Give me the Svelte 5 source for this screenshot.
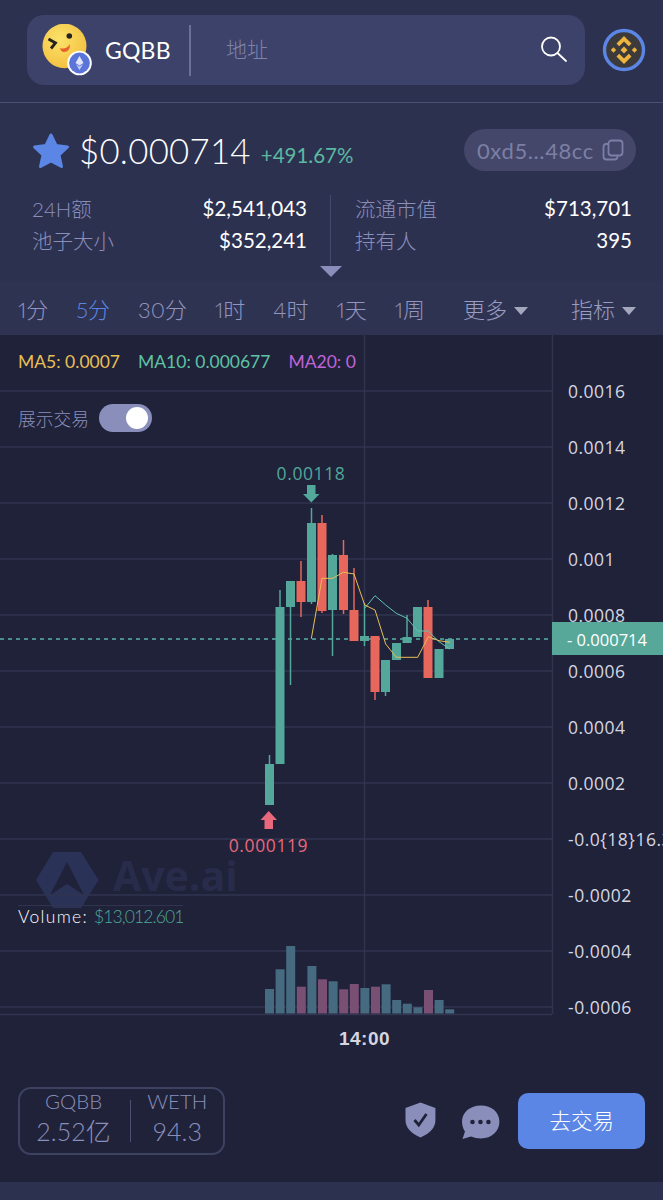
<script>
	const tabs = [
		{ label: '1分' },
		{ label: '5分', active: true },
		{ label: '30分' },
		{ label: '1时' },
		{ label: '4时' },
		{ label: '1天' },
		{ label: '1周' }
	];

	const axis = ['0.0016', '0.0014', '0.0012', '0.001', '0.0008', '0.0006', '0.0004', '0.0002', '-0.0{18}16.3', '-0.0002', '-0.0004', '-0.0006'];
	const gridY = axis.map((_, i) => 391 + i * 56);

	// x, body top, body bottom, wick top, wick bottom, up
	const candles = [
		[269.5, 764, 805, 755, 805, 1],
		[280, 607, 764, 590, 764, 1],
		[290.5, 581, 607, 581, 685, 1],
		[301, 581, 602, 561, 617, 0],
		[311.5, 523, 602, 508, 604, 1],
		[322, 523, 611, 515, 613, 0],
		[332.5, 555, 610, 554, 656, 1],
		[343.5, 555, 610, 540, 614, 0],
		[354, 610, 641, 568, 641, 0],
		[364.5, 636, 641, 603, 646, 1],
		[375, 636, 692, 636, 700, 0],
		[385.5, 660, 692, 660, 696, 1],
		[396.5, 643, 660, 643, 660, 1],
		[407, 637, 643, 615, 643, 1],
		[417.5, 607, 637, 607, 637, 1],
		[428, 607, 678, 600, 678, 0],
		[439, 649, 678, 649, 678, 1],
		[449.5, 639, 649, 639, 649, 1]
	];

	const ma5 = '311.3,638.7 322,578.3 332.7,578.3 343.3,572.3 354,574 364.7,605 375,610 385.7,644 396.3,657.3 407,657.3 417.7,657.3 428.3,636.7 439,640.7 449.7,642.3';
	const ma10 = '364.7,608.3 375,595.7 385.7,605 396.3,613.3 407,618.3 417.7,631 428.3,631 439,641.7 449.7,649';

	// top of the volume bar, pink when the candle closed down
	const volumes = [
		[989, 0], [969.3, 0], [946, 0], [986.7, 1], [966, 0], [979.3, 1], [981.3, 0], [989.3, 1], [984, 1],
		[988, 0], [986.7, 1], [984.3, 0], [1000, 0], [1003.7, 0], [1007.3, 0], [990, 1], [1000, 0], [1009.3, 0]
	];
</script>

<div class="page">
	<header class="top">
		<div class="search">
			<svg class="avatar" viewBox="0 0 52 52" width="52" height="52">
				<defs>
					<radialGradient id="face" cx="40%" cy="35%" r="75%">
						<stop offset="0" stop-color="#fbe26a" />
						<stop offset="1" stop-color="#f3bd3c" />
					</radialGradient>
				</defs>
				<ellipse cx="22.500" cy="22" rx="22" ry="22.300" fill="url(#face)" />
				<circle cx="27.300" cy="12" r="2.800" fill="#26231f" />
				<path d="M6.500 15 L13.500 19 L9 24.500" fill="none" stroke="#26231f" stroke-width="2.800" />
				<path d="M18 24 Q24 26 28 20 Q28 28 22 28 Q19 28 18 24Z" fill="#e8632c" />
				<circle cx="37.500" cy="39" r="12.300" fill="#fff" />
				<circle cx="37.500" cy="39" r="10.400" fill="#5b74d8" />
				<path d="M37.500 32 L41.500 39 L37.500 41.500 L33.500 39Z" fill="#dfe5fb" />
				<path d="M37.500 42.500 L41 40.200 L37.500 46 L34 40.200Z" fill="#c4cef5" />
			</svg>
			<span class="symbol">GQBB</span>
			<span class="divider"></span>
			<span class="placeholder">地址</span>
			<svg class="lens" viewBox="0 0 27 26" width="27" height="26" fill="none" stroke="#fff" stroke-width="1.800">
				<circle cx="11" cy="10.500" r="9" />
				<path d="M17.500 17 L26 25" stroke-linecap="round" />
			</svg>
		</div>
		<svg class="chain" viewBox="0 0 44 44" width="44" height="44">
			<circle cx="22" cy="22" r="19.500" fill="#3c3a3a" stroke="#5b86e5" stroke-width="3.400" />
			<g fill="#eeb53e">
				<path d="M22 8 L29.500 15.500 L26.800 18.200 L22 13.400 L17.200 18.200 L14.500 15.500Z" />
				<path d="M22 36 L14.500 28.500 L17.200 25.800 L22 30.600 L26.800 25.800 L29.500 28.500Z" />
				<path d="M22 18.500 L25.500 22 L22 25.500 L18.500 22Z" />
				<path d="M11.500 19.300 L14.200 22 L11.500 24.700 L8.800 22Z" />
				<path d="M32.500 19.300 L35.200 22 L32.500 24.700 L29.800 22Z" />
			</g>
		</svg>
	</header>

	<section class="price-row">
		<svg viewBox="0 0 38 36" width="38" height="36">
			<path d="M19 2 L24 12.500 L35.500 14 L27 22 L29.500 33.500 L19 28 L8.500 33.500 L11 22 L2.500 14 L14 12.500Z" fill="#5b86e5" stroke="#5b86e5" stroke-width="3" stroke-linejoin="round" />
		</svg>
		<span class="price">$0.000714</span>
		<span class="change">+491.67%</span>
		<div class="address">
			<span>0xd5...48cc</span>
			<svg viewBox="0 0 22 22" width="22" height="22" fill="none" stroke="#7c7fa6" stroke-width="1.800">
				<rect x="6.500" y="1.500" width="14" height="15" rx="3" />
				<path d="M6 5 H4 Q1.500 5 1.500 8 V17.500 Q1.500 20.500 4.500 20.500 H13 Q15.500 20.500 15.500 17" />
			</svg>
		</div>
	</section>

	<section class="stats">
		<dl>
			<div><dt>24H额</dt><dd>$2,541,043</dd></div>
			<div><dt>池子大小</dt><dd>$352,241</dd></div>
		</dl>
		<dl class="right">
			<div><dt>流通市值</dt><dd>$713,701</dd></div>
			<div><dt>持有人</dt><dd>395</dd></div>
		</dl>
		<span class="expand"></span>
	</section>

	<nav class="tabs">
		{#each tabs as tab}
			<span class="tab" class:active={tab.active}>{tab.label}</span>
		{/each}
		<span class="tab menu more">更多<i></i></span>
		<span class="tab menu">指标<i></i></span>
	</nav>

	<div class="chart">
		<svg viewBox="0 335 663 725" width="663" height="725">
			<text class="mark" x="113" y="891">Ave.ai</text>
			<path d="M53 852 H81 L98.500 880 L81 908 H53 L36 880Z" fill="#2b3258" />
			<path d="M67 862 L84 895 L67 884 L50 895Z" fill="#1f2239" />

			{#each gridY as y}
				<line x1="0" x2="552" y1={y} y2={y} class="grid" />
			{/each}
			<line x1="0" x2="552" y1="1014.500" y2="1014.500" class="grid" />
			<line x1="364.500" x2="364.500" y1="335" y2="1014" class="grid" />
			<line x1="552.500" x2="552.500" y1="335" y2="1014" class="grid" />

			{#each axis as label, i}
				<text class="tick" x="568" y={gridY[i] + 6.500}>{label}</text>
			{/each}

			{#each volumes as [top, down], i}
				<rect x={265 + i * 10.6} y={top} width="9" height={1013.500 - top} fill={down ? '#7a4f74' : '#466a80'} />
			{/each}

			<line x1="0" x2="552" y1="639" y2="639" stroke="#58b3a6" stroke-width="1.300" stroke-dasharray="4 4" />

			{#each candles as [x, top, bottom, wickTop, wickBottom, up]}
				<line x1={x} x2={x} y1={wickTop} y2={wickBottom} stroke={up ? '#53a79b' : '#e8675c'} stroke-width="1.500" />
				<rect x={x - 4.500} y={top} width="9" height={bottom - top} fill={up ? '#53a79b' : '#e8675c'} />
			{/each}

			<polyline points={ma10} fill="none" stroke="#62c2b0" stroke-width="1" />
			<polyline points={ma5} fill="none" stroke="#e9bf55" stroke-width="1" />

			<text class="extreme" x="311" y="480" fill="#53a79b">0.00118</text>
			<path d="M307 485 H315.500 V494 H319.500 L311.300 502.500 L303 494 H307Z" fill="#53a79b" />
			<text class="extreme" x="268.500" y="852" fill="#e8687c">0.000119</text>
			<path d="M264.500 829 H273 V820 H277 L268.700 811 L260.500 820 H264.500Z" fill="#e8687c" />

			<rect x="552" y="622" width="111" height="33" fill="#58a89a" />
			<text class="last" x="567" y="645.500">- 0.000714</text>

			<text class="time" x="364.500" y="1045">14:00</text>
		</svg>

		<div class="legend">
			<span class="ma5">MA5: 0.0007</span>
			<span class="ma10">MA10: 0.000677</span>
			<span class="ma20">MA20: 0</span>
		</div>
		<div class="trades">
			<span>展示交易</span>
			<span class="switch"><i></i></span>
		</div>
		<div class="volume">Volume: <span>$13,012.601</span></div>
	</div>

	<footer class="bottom">
		<div class="pool">
			<div class="side first"><span>GQBB</span><b>2.52亿</b></div>
			<div class="side"><span>WETH</span><b>94.3</b></div>
		</div>
		<svg class="shield" viewBox="0 0 31 36" width="31" height="36">
			<path d="M15.500 0.500 L30.500 6 V18 Q30.500 29 15.500 35.500 Q0.500 29 0.500 18 V6Z" fill="#8a8ebb" />
			<path d="M9.500 18 L13.800 23 L21.500 12" fill="none" stroke="#1f2239" stroke-width="2.800" />
		</svg>
		<svg class="bubble" viewBox="0 0 39 35" width="39" height="35">
			<path d="M20 0.500 C31 0.500 38.500 7.500 38.500 16.500 C38.500 26 31 33.500 20 33.500 C16.500 33.500 13 32.800 10 31.500 L1.500 34 L4 26.500 C2 23.500 1 20 1 16.500 C1 7.500 9 0.500 20 0.500Z" fill="#8a8ebb" />
			<circle cx="11.500" cy="17" r="2.300" fill="#1f2239" />
			<circle cx="19.500" cy="17" r="2.300" fill="#1f2239" />
			<circle cx="27.500" cy="17" r="2.300" fill="#1f2239" />
		</svg>
		<button class="trade">去交易</button>
	</footer>
	<div class="strip"></div>
</div>

<style>
	:global(body) {
		background: #2d3150;
	}

	.page {
		width: 663px;
		height: 1200px;
		overflow: hidden;
		background: #2d3150;
		font-family: Lato, "Noto Sans CJK SC", sans-serif;
		color: #8a8ebb;
	}

	.top {
		display: flex;
		align-items: flex-start;
		padding: 15px 0 0 27px;
		height: 87px;
		border-bottom: 1px solid #4c5071;
	}

	.search {
		width: 558px;
		height: 70px;
		background: #3c4269;
		border-radius: 17px;
		display: flex;
		align-items: center;
		padding-left: 15px;
		box-sizing: border-box;
	}

	.avatar {
		flex: none;
	}

	.symbol {
		margin-left: 11px;
		font-size: 23px;
		color: #fff;
		width: 70px;
		letter-spacing: 0.2px;
	}

	.divider {
		width: 2px;
		height: 51px;
		background: #6c7097;
		margin-left: 14px;
	}

	.placeholder {
		margin-left: 35px;
		font-size: 21px;
		font-weight: 300;
		color: #7f83a9;
		flex: 1;
		margin-top: -5px;
	}

	.lens {
		margin-right: 18px;
		margin-top: -2px;
	}

	.chain {
		margin: 13px 0 0 17px;
	}

	.price-row {
		height: 84px;
		display: flex;
		align-items: center;
		padding-left: 32px;
		position: relative;
		box-sizing: border-box;
		padding-top: 11px;
	}

	.price {
		margin-left: 9px;
		font-size: 34.700px;
		font-weight: 300;
		color: #fff;
		letter-spacing: 0.3px;
	}

	.change {
		margin: 9px 0 0 10px;
		font-size: 20.500px;
		color: #5ab9a0;
	}

	.address {
		margin-left: auto;
		margin-right: 27px;
		width: 172px;
		height: 42px;
		border-radius: 21px;
		background: #444769;
		display: flex;
		align-items: center;
		justify-content: space-between;
		padding: 0 12px 0 13px;
		box-sizing: border-box;
		font-size: 22px;
		letter-spacing: 0.6px;
		color: #7c7fa6;
		margin-top: -1px;
	}

	.stats {
		height: 94px;
		position: relative;
		display: grid;
		grid-template-columns: 331px 1fr;
		box-sizing: border-box;
		padding-top: 8px;
	}

	.stats dl {
		margin: 0;
		padding: 0 23px 0 32px;
		font-size: 20.500px;
		height: 70px;
		display: flex;
		flex-direction: column;
		border-right: 1px solid #44486a;
	}

	.stats .right {
		border-right: 0;
		padding: 0 31px 0 24px;
	}

	.stats dl div {
		display: flex;
		justify-content: space-between;
		align-items: center;
		height: 32px;
		position: relative;
		top: -3px;
	}

	.stats dt {
		font-weight: 300;
	}

	.stats dd {
		margin: 0;
		color: #fff;
	}

	.expand {
		position: absolute;
		left: 320px;
		top: 79px;
		border-left: 11px solid transparent;
		border-right: 11px solid transparent;
		border-top: 11px solid #8a8ebb;
	}

	.tabs {
		height: 54px;
		display: flex;
		align-items: center;
		padding: 0 27px 0 18px;
		font-size: 22px;
		font-weight: 300;
		color: #9195c0;
		background: #2f3352;
		font-variant-numeric: proportional-nums;
	}

	.tab {
		margin-right: 28px;
		white-space: nowrap;
	}

	.tab.active {
		color: #5b86e5;
	}

	.menu {
		margin: 0;
		color: #9a9dc2;
	}

	.more {
		margin-left: auto;
		margin-right: 43px;
	}

	.menu i {
		display: inline-block;
		margin-left: 7px;
		vertical-align: 3px;
		border-left: 7.500px solid transparent;
		border-right: 7.500px solid transparent;
		border-top: 8px solid #a5a7bf;
	}

	.chart {
		height: 725px;
		background: #1f2239;
		position: relative;
		overflow: hidden;
	}

	.chart svg {
		display: block;
	}

	.grid {
		stroke: #30344f;
		stroke-width: 1.500;
	}

	.tick {
		font: 17.500px "Open Sans", sans-serif;
		letter-spacing: 0.5px;
		fill: #d5d6e0;
	}

	.mark {
		font: bold 41px "Open Sans", sans-serif;
		fill: #282c4a;
	}

	.extreme {
		font: 17.500px "Open Sans", sans-serif;
		letter-spacing: 0.6px;
		text-anchor: middle;
	}

	.last {
		font: 16.500px "Open Sans", sans-serif;
		fill: #fff;
	}

	.time {
		font: bold 19px "Liberation Sans", sans-serif;
		letter-spacing: 0.5px;
		fill: #d5d6e0;
		text-anchor: middle;
	}

	.legend {
		position: absolute;
		left: 18px;
		top: 16px;
		display: flex;
		gap: 18px;
		font-size: 17.500px;
		white-space: nowrap;
	}

	.ma5 {
		color: #e9bf55;
	}

	.ma10 {
		color: #5ec2a4;
	}

	.ma20 {
		color: #c064d8;
	}

	.trades {
		position: absolute;
		left: 18px;
		top: 69px;
		display: flex;
		align-items: center;
		gap: 10px;
		font-size: 17.800px;
		font-weight: 300;
	}

	.switch {
		width: 53px;
		height: 28px;
		border-radius: 14px;
		background: #8a8ebb;
		position: relative;
	}

	.switch i {
		position: absolute;
		right: 4px;
		top: 3px;
		width: 22px;
		height: 22px;
		border-radius: 50%;
		background: #fff;
	}

	.volume {
		position: absolute;
		left: 18px;
		top: 570px;
		font-size: 17.500px;
		font-weight: 300;
		letter-spacing: 1.300px;
		color: #fff;
		border-top: 1px solid #30344f;
	}

	.volume span {
		color: #4fa89a;
		letter-spacing: -0.900px;
	}

	.bottom {
		height: 122px;
		background: #1f2239;
		display: flex;
		align-items: flex-start;
		padding: 27px 18px 0;
		box-sizing: border-box;
	}

	.pool {
		width: 208px;
		height: 68px;
		border: 2px solid #3e4261;
		border-radius: 13px;
		box-sizing: border-box;
		display: flex;
		align-items: flex-start;
	}

	.side {
		flex: 1;
		display: flex;
		flex-direction: column;
		align-items: center;
		font-weight: 300;
		margin-top: -2px;
	}

	.side.first {
		flex: none;
		width: 111px;
		padding-right: 4px;
		box-sizing: border-box;
		position: relative;
	}

	.side.first::after {
		content: '';
		position: absolute;
		right: 0;
		top: 13px;
		height: 42px;
		width: 1px;
		background: #4c5071;
	}

	.side span {
		font-size: 20.500px;
		line-height: 28px;
	}

	.side b {
		font-size: 25px;
		line-height: 33px;
		font-weight: 300;
	}

	.shield {
		margin: 15px 0 0 180px;
	}

	.bubble {
		margin: 18px 0 0 25px;
	}

	.trade {
		margin: 6px 0 0 18px;
		width: 127px;
		height: 56px;
		border: 0;
		border-radius: 10px;
		background: #5b86e5;
		color: #fff;
		padding: 0 0 4px;
		font: 300 21.500px "Noto Sans CJK SC", sans-serif;
	}

	.strip {
		height: 18px;
		background: #2d3150;
	}
</style>
